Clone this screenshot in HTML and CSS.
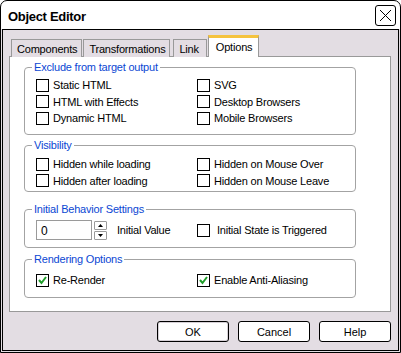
FILE: index.html
```html
<!DOCTYPE html>
<html lang="en">
<head>
    <meta charset="UTF-8">
    <title>Object Editor</title>
    <link rel="stylesheet" href="styles.css">
</head>
<body>

    <div class="window">
        <div class="titlebar">
            <span class="title">Object Editor</span>
            <span class="close-btn">
                <svg width="19" height="19" viewBox="0 0 19 19"><path d="M4 4 L15 15 M15 4 L4 15" stroke="#000" stroke-width="1" fill="none"/></svg>
            </span>
        </div>

        <div class="frame">
            <div class="client">
                <div class="tabs">
                    <div class="tab">Components</div>
                    <div class="tab">Transformations</div>
                    <div class="tab tab-link">Link</div>
                    <div class="tab active">Options</div>
                </div>

                <div class="panel">
                    <fieldset class="group group-exclude">
                        <legend>Exclude from target output</legend>
                        <div class="grid">
                            <label class="check"><span class="box"></span>Static HTML</label>
                            <label class="check"><span class="box"></span>SVG</label>
                            <label class="check"><span class="box"></span>HTML with Effects</label>
                            <label class="check"><span class="box"></span>Desktop Browsers</label>
                            <label class="check"><span class="box"></span>Dynamic HTML</label>
                            <label class="check"><span class="box"></span>Mobile Browsers</label>
                        </div>
                    </fieldset>

                    <fieldset class="group group-visibility">
                        <legend>Visibility</legend>
                        <div class="grid">
                            <label class="check"><span class="box"></span>Hidden while loading</label>
                            <label class="check"><span class="box"></span>Hidden on Mouse Over</label>
                            <label class="check"><span class="box"></span>Hidden after loading</label>
                            <label class="check"><span class="box"></span>Hidden on Mouse Leave</label>
                        </div>
                    </fieldset>

                    <fieldset class="group group-behavior">
                        <legend>Initial Behavior Settings</legend>
                        <div class="grid">
                            <div class="spin">
                                <span class="field">0</span>
                                <span class="arrows">
                                    <span class="arrow"><svg width="5" height="3" viewBox="0 0 5 3"><path d="M0 3 L2.5 0 L5 3 Z" fill="#000"/></svg></span>
                                    <span class="arrow"><svg width="5" height="3" viewBox="0 0 5 3"><path d="M0 0 L2.5 3 L5 0 Z" fill="#000"/></svg></span>
                                </span>
                                <span class="spin-label">Initial Value</span>
                            </div>
                            <label class="check wide"><span class="box"></span>Initial State is Triggered</label>
                        </div>
                    </fieldset>

                    <fieldset class="group group-render">
                        <legend>Rendering Options</legend>
                        <div class="grid">
                            <label class="check"><span class="box"><svg width="11" height="11" viewBox="0 0 11 11"><path d="M2 5 L4.5 8 L9 2" stroke="#1f9e2a" stroke-width="2" fill="none"/></svg></span>Re-Render</label>
                            <label class="check"><span class="box"><svg width="11" height="11" viewBox="0 0 11 11"><path d="M2 5 L4.5 8 L9 2" stroke="#1f9e2a" stroke-width="2" fill="none"/></svg></span>Enable Anti-Aliasing</label>
                        </div>
                    </fieldset>
                </div>

                <div class="buttons">
                    <button class="btn default">OK</button>
                    <button class="btn">Cancel</button>
                    <button class="btn">Help</button>
                </div>
            </div>
        </div>
    </div>

</body>
</html>
```

FILE: styles.css
```css
body {
    margin: 0;
    padding: 0;
    font-family: 'Liberation Sans', Arial, sans-serif;
    font-size: 11px;
    letter-spacing: -0.2px;
    color: #000;
    background-color: #fff;
}
.window {
    width: 401px;
    height: 353px;
    box-sizing: border-box;
    border: 1px solid #000;
    border-radius: 7px 7px 0 0;
    background-color: #fff;
    overflow: hidden;
    display: flex;
    flex-direction: column;
}
.titlebar {
    height: 28px;
    flex-shrink: 0;
    display: flex;
    align-items: center;
    justify-content: space-between;
    padding: 0 4px 0 7px;
}
.title {
    font-size: 13px;
    font-weight: bold;
    letter-spacing: -0.3px;
    margin-top: 2px;
}
.close-btn {
    width: 19px;
    height: 19px;
    border: 1px solid #000;
    border-radius: 3px;
    display: flex;
    margin-top: 1px;
}
.frame {
    flex: 1;
    background-color: #e3dde3;
    padding: 0 1px 1px;
    display: flex;
}
.client {
    flex: 1;
    border: 1px solid #000;
    padding: 5px 7px 0 6px;
    display: flex;
    flex-direction: column;
}

/* tabs */
.tabs {
    display: flex;
    align-items: flex-end;
    gap: 1px;
    padding-left: 2px;
    margin-bottom: -1px;
    position: relative;
    z-index: 1;
}
.tab {
    height: 18px;
    box-sizing: border-box;
    border: 1px solid #999;
    border-bottom: none;
    padding: 3px 4px 0 5px;
    background-color: #e3dde3;
}
.tab-link {
    margin-left: 2px;
    padding-right: 7px;
}
.tab.active {
    height: 22px;
    background-color: #fff;
    border-top: 3px solid #f5c33f;
    padding: 3px 6px 0 7px;
}

/* panel */
.panel {
    height: 256px;
    box-sizing: border-box;
    background-color: #fff;
    border: 1px solid #999;
    padding: 4px 0 0 14px;
}
.group {
    width: 332px;
    box-sizing: border-box;
    margin: 0;
    border: 1px solid #a3a3a3;
    border-radius: 4px;
    padding: 3px 0 0 11px;
}
.group legend {
    color: #0b47d3;
    padding: 0 2px;
    margin-left: -4px;
    line-height: 13px;
}
.group-exclude { height: 74px; }
.group-visibility { height: 53px; margin-top: 4px; }
.group-visibility .grid { padding-top: 1px; }
.group-behavior { height: 45px; margin-top: 11px; }
.group-behavior .grid { padding-top: 1px; }
.group-render { height: 45px; margin-top: 5px; }
.group-render .grid { padding-top: 3px; }

.grid {
    display: grid;
    grid-template-columns: 161px 1fr;
    grid-auto-rows: 16.5px;
}
.check {
    display: flex;
    align-items: center;
    gap: 4px;
}
.check.wide {
    gap: 7px;
}
.box {
    width: 13px;
    height: 13px;
    box-sizing: border-box;
    border: 1px solid #000;
    background-color: #fff;
    display: flex;
    align-items: center;
    justify-content: center;
    flex-shrink: 0;
}
.group-behavior .grid {
    grid-auto-rows: 20px;
}

/* spinner */
.spin {
    display: flex;
    align-items: center;
}
.field {
    width: 56px;
    height: 20px;
    box-sizing: border-box;
    border: 1px solid #9a9a9a;
    padding: 3px 0 0 4px;
    font-size: 12px;
}
.arrows {
    display: flex;
    flex-direction: column;
    gap: 1px;
    margin-left: 2px;
}
.arrow {
    width: 13px;
    height: 9px;
    box-sizing: border-box;
    border: 1px solid #9a9a9a;
    border-radius: 1px;
    display: flex;
    align-items: center;
    justify-content: center;
}
.spin-label {
    margin-left: 10px;
}

/* buttons */
.buttons {
    display: flex;
    justify-content: flex-end;
    gap: 9px;
    margin-top: 9px;
}
.btn {
    width: 72px;
    height: 21px;
    font-family: 'Liberation Sans', Arial, sans-serif;
    font-size: 11px;
    color: #000;
    background-color: #fff;
    border: 1px solid #000;
    border-radius: 3px;
    padding: 0;
}
.btn.default {
    box-shadow: inset 0 0 0 1px #d6d0d6;
}
```
